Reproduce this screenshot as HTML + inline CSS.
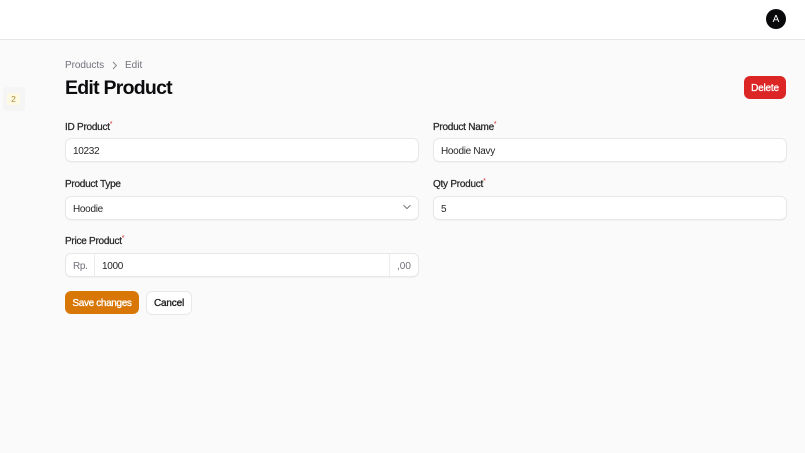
<!DOCTYPE html>
<html><head><meta charset="utf-8">
<style>
*{box-sizing:border-box;margin:0;padding:0}
html,body{width:805px;height:453px;overflow:hidden;background:#fafafa;font-family:"Liberation Sans",sans-serif;color:#18181b}
.a{position:absolute;white-space:nowrap}
.top{left:0;top:0;width:805px;height:40px;background:#fff;border-bottom:1px solid #e6e6e7}
.lab{font-size:10px;line-height:14px;color:#27272a;letter-spacing:-.25px;-webkit-text-stroke:.25px #27272a;margin-top:2px}
.lab sup{position:absolute;top:-1px;font-size:7px;line-height:10px;color:#dc2626;-webkit-text-stroke:0;letter-spacing:0}
.in{height:24px;background:#fff;border:1px solid #e8e8ea;border-radius:6px;box-shadow:0 1px 1px rgba(0,0,0,.04);font-size:10px;letter-spacing:-.3px;line-height:25px;padding-left:7px;color:#27272a}
.btn{border-radius:6px;font-size:10px;letter-spacing:-.2px;text-align:center;-webkit-text-stroke:.3px currentColor}
.t{font-size:10px;line-height:25px}
</style></head><body>
<div class="a top"></div>
<div class="a" style="left:766px;top:9px;width:20px;height:20px;border-radius:50%;background:#09090b;color:#fff;font-size:10px;line-height:21px;text-align:center">A</div>

<div class="a" style="left:3px;top:87px;width:22px;height:24px;background:#f5f5f5;border-radius:3px"></div>
<div class="a" style="left:7px;top:93px;width:13px;height:12px;background:#fef9e3;border-radius:3px;color:#a58a3c;font-size:8.5px;line-height:12px;text-align:center">2</div>

<div class="a" style="left:65px;top:59px;font-size:10px;line-height:13px;color:#71717a;letter-spacing:-.05px">Products</div>
<svg class="a" style="left:111px;top:61px" width="8" height="9" viewBox="0 0 8 9"><path d="M2 1l3.4 3.5L2 8" fill="none" stroke="#8a8a92" stroke-width="1"/></svg>
<div class="a" style="left:125px;top:59px;font-size:10px;line-height:13px;color:#71717a">Edit</div>
<div class="a" style="left:65px;top:76px;font-size:19.5px;line-height:25px;font-weight:700;color:#0c0c0f;letter-spacing:-.75px">Edit Product</div>

<div class="a btn" style="left:744px;top:76px;width:42px;height:23px;background:#dc2626;color:#fff;line-height:25px">Delete</div>

<div class="a lab" style="left:65px;top:119px">ID Product<sup>*</sup></div>
<div class="a in" style="left:65px;top:138px;width:354px">10232</div>

<div class="a lab" style="left:433px;top:119px">Product Name<sup>*</sup></div>
<div class="a in" style="left:433px;top:138px;width:354px">Hoodie Navy</div>

<div class="a lab" style="left:65px;top:176px">Product Type</div>
<div class="a in" style="left:65px;top:196px;width:354px">Hoodie</div>
<svg class="a" style="left:402px;top:203px" width="10" height="8" viewBox="0 0 10 8"><path d="M1.5 2.2L5 5.6l3.5-3.4" fill="none" stroke="#6b6b73" stroke-width="1"/></svg>

<div class="a lab" style="left:433px;top:176px">Qty Product<sup>*</sup></div>
<div class="a in" style="left:433px;top:196px;width:354px">5</div>

<div class="a lab" style="left:65px;top:233px">Price Product<sup>*</sup></div>
<div class="a in" style="left:65px;top:253px;width:354px;padding:0;background:#fff"></div>
<div class="a" style="left:94px;top:254px;width:1px;height:22px;background:#ececee"></div>
<div class="a" style="left:389px;top:254px;width:1px;height:22px;background:#ececee"></div>
<div class="a t" style="left:73px;top:254px;color:#71717a;letter-spacing:-.3px">Rp.</div>
<div class="a t" style="left:102px;top:254px;color:#27272a;letter-spacing:-.3px">1000</div>
<div class="a t" style="left:397px;top:254px;color:#71717a">,00</div>

<div class="a btn" style="left:65px;top:291px;width:74px;height:23px;background:#d97706;color:#fff;line-height:25px;letter-spacing:-.35px">Save changes</div>
<div class="a btn" style="left:146px;top:291px;width:46px;height:24px;background:#fff;border:1px solid #e8e8ea;color:#18181b;line-height:24px">Cancel</div>
</body></html>
